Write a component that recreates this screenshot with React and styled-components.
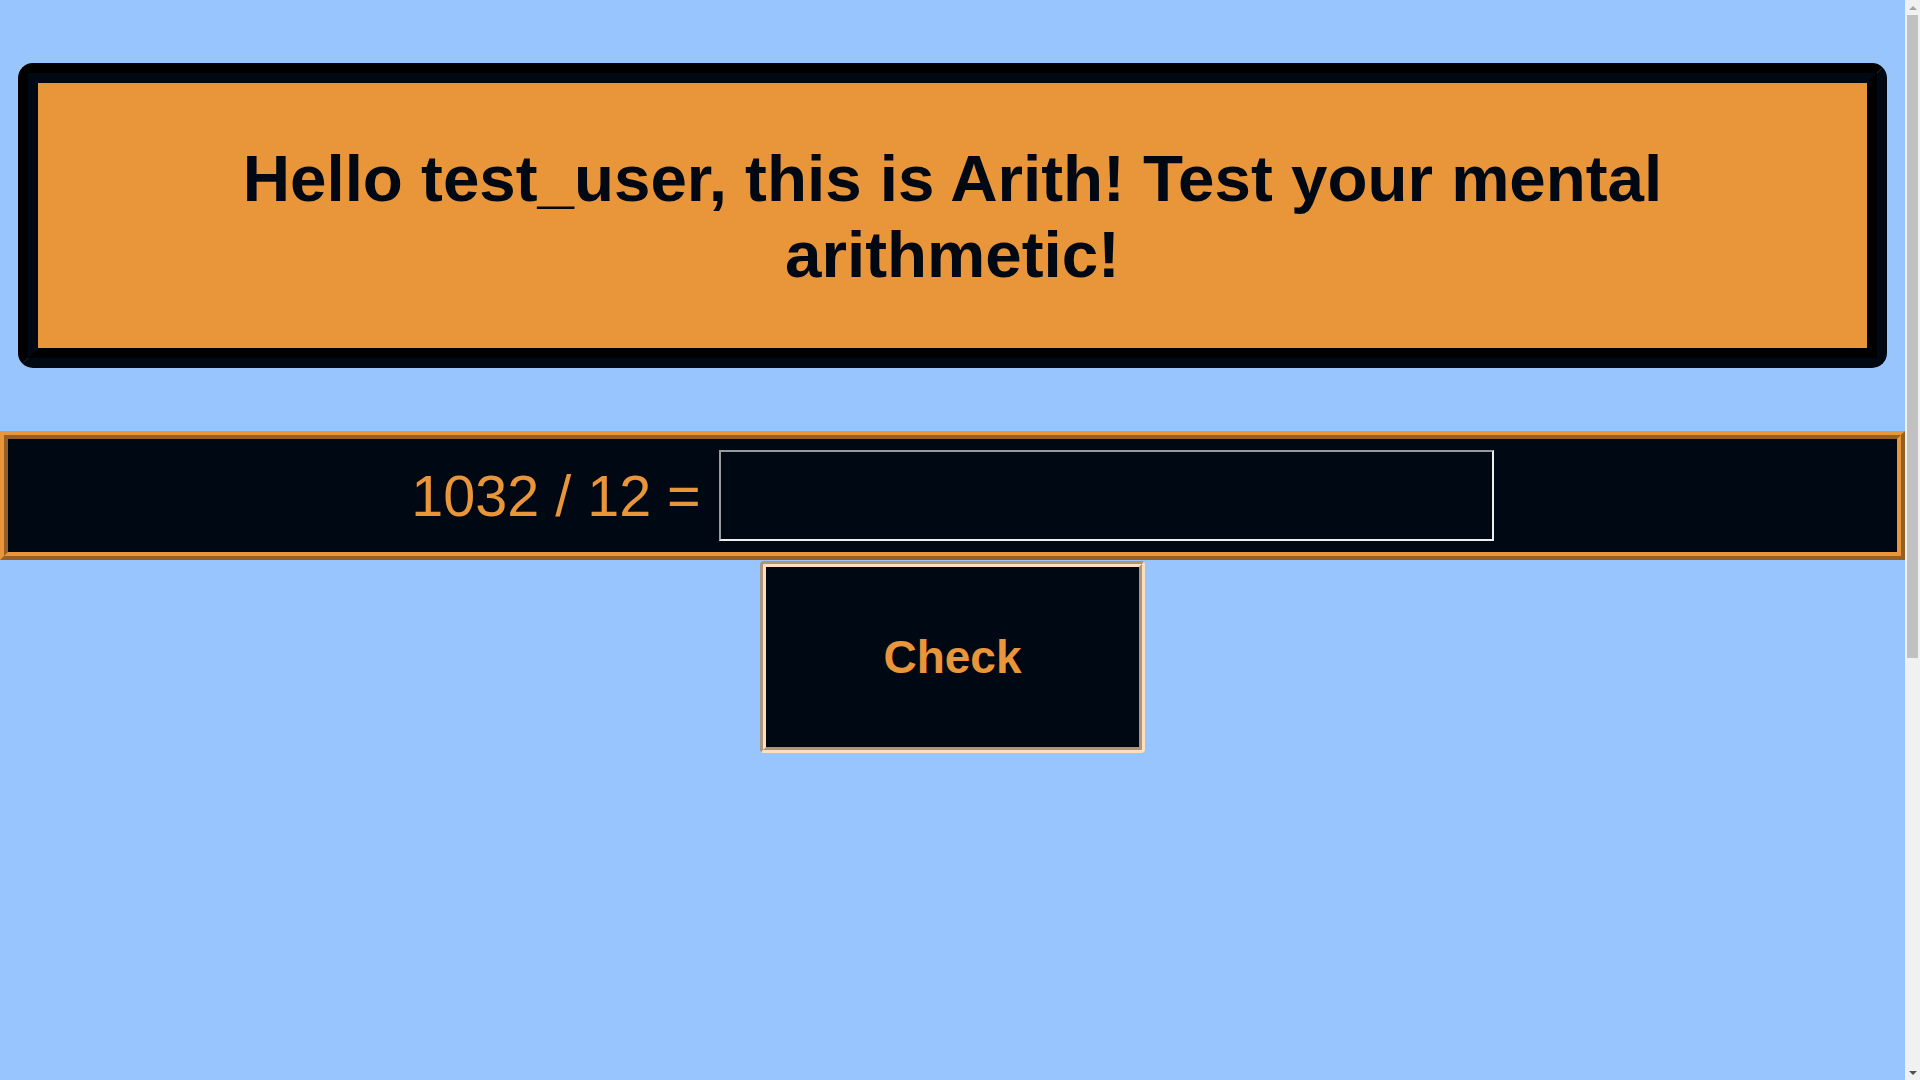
import React, { useState } from 'react';
import styled, { createGlobalStyle } from 'styled-components';

// palette
const NAVY = '#000814';
const BLACK = '#000000';
const ORANGE = '#e9953a';
const SKY = '#99c5ff';
const PEACH = '#ffdfbb';

const GlobalStyle = createGlobalStyle`
  html, body {
    margin: 0;
    padding: 0;
    background-color: ${SKY};
  }

  body {
    font-family: "Liberation Sans", Arial, sans-serif;
  }
`;

// Page wrapper (leaves room for the window scrollbar)
const Page = styled.main`
  min-height: 1764px;
  margin-right: 15px;
  padding-top: 63px;
  box-sizing: border-box;
`;

// Greeting banner: rounded dark frame around an orange panel
const BannerFrame = styled.header`
  margin: 0 18px 63px;
  background-color: ${NAVY};
  border: 10px solid;
  border-color: ${BLACK} ${NAVY} ${NAVY} ${BLACK};
  border-radius: 15px;
`;

const BannerPanel = styled.div`
  padding: 58px 120px 55px;
  background-color: ${ORANGE};
  border: 10px solid;
  border-color: ${NAVY} ${BLACK} ${BLACK} ${NAVY};
  text-align: center;
`;

const Title = styled.h1`
  margin: 0;
  color: ${NAVY};
  font-size: 65.5px;
  font-weight: 700;
  line-height: 76px;
`;

// Row holding the question and the answer field
const ProblemRow = styled.section`
  display: flex;
  align-items: center;
  justify-content: center;
  gap: 18px;
  padding: 11px 0;
  background-color: ${NAVY};
  border: 8px ridge ${ORANGE};
`;

const Question = styled.label`
  color: ${ORANGE};
  font-size: 57.5px;
  line-height: 66px;
  white-space: nowrap;
`;

const AnswerInput = styled.input`
  box-sizing: border-box;
  width: 775px;
  height: 91px;
  padding: 0 12px;
  background-color: ${NAVY};
  border: 2px inset #eeeeee;
  color: ${ORANGE};
  font-family: inherit;
  font-size: 57px;
  outline: none;
`;

const ButtonRow = styled.div`
  display: flex;
  justify-content: center;
  padding-top: 1px;
`;

const CheckButton = styled.button`
  box-sizing: border-box;
  width: 385px;
  height: 192px;
  background-color: ${NAVY};
  border: 6px groove ${PEACH};
  border-radius: 4px;
  color: ${ORANGE};
  font-family: inherit;
  font-size: 46px;
  font-weight: 700;
  cursor: pointer;
`;

// Window scrollbar drawn over the right edge
const ScrollTrack = styled.div`
  position: fixed;
  top: 0;
  right: 0;
  bottom: 0;
  width: 15px;
  display: flex;
  flex-direction: column;
  align-items: center;
  background-color: #f1f1f1;
`;

const ScrollArrow = styled.div`
  flex: 0 0 15px;
  width: 15px;
  display: flex;
  align-items: center;
  justify-content: center;

  &::before {
    content: '';
    width: 0;
    height: 0;
    border-left: 4px solid transparent;
    border-right: 4px solid transparent;
    ${(p) => (p.$down
      ? 'border-top: 4px solid #505050;'
      : 'border-bottom: 4px solid #a3a3a3;')}
  }
`;

const ScrollThumb = styled.div`
  width: 11px;
  height: 643px;
  background-color: #c1c1c1;
`;

const ScrollSpace = styled.div`
  flex: 1;
`;

const App = () => {
  const [answer, setAnswer] = useState('');

  return (
    <>
      <GlobalStyle />
      <Page>
        <BannerFrame>
          <BannerPanel>
            <Title>Hello test_user, this is Arith! Test your mental arithmetic!</Title>
          </BannerPanel>
        </BannerFrame>

        <ProblemRow>
          <Question htmlFor="answer">1032 / 12 =</Question>
          <AnswerInput
            id="answer"
            type="text"
            value={answer}
            onChange={(e) => setAnswer(e.target.value)}
          />
        </ProblemRow>

        <ButtonRow>
          <CheckButton type="button">Check</CheckButton>
        </ButtonRow>
      </Page>

      <ScrollTrack aria-hidden="true">
        <ScrollArrow />
        <ScrollThumb />
        <ScrollSpace />
        <ScrollArrow $down />
      </ScrollTrack>
    </>
  );
};

export default App;
